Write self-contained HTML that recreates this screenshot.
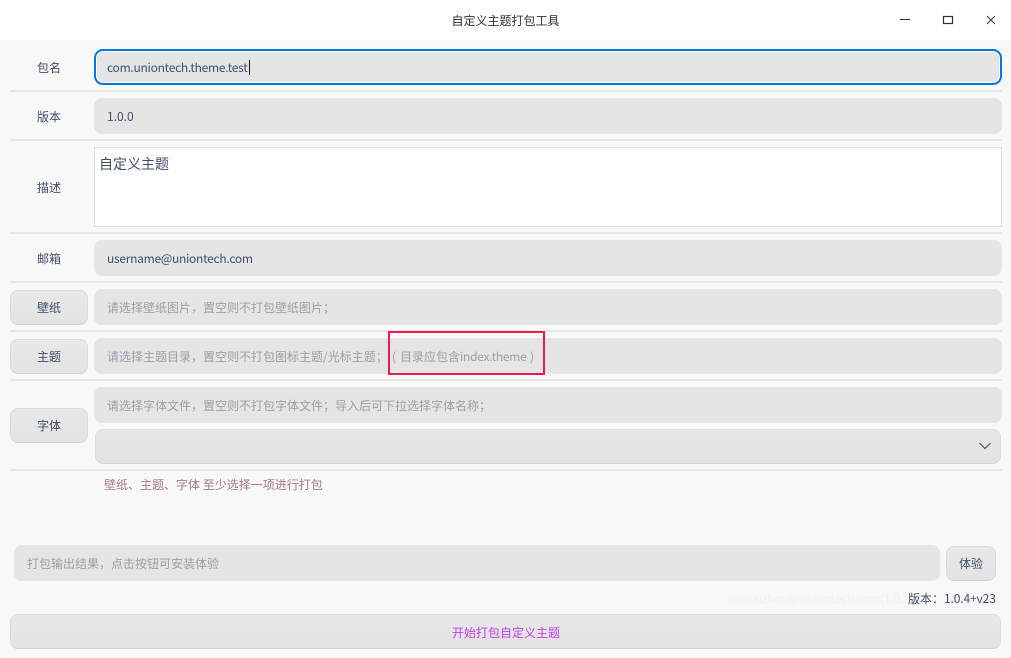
<!DOCTYPE html>
<html lang="zh">
<head>
<meta charset="utf-8">
<style>
html,body{margin:0;padding:0;width:1011px;height:658px;overflow:hidden;background:#f8f8f8;}
body{position:relative;font-family:"Noto Sans CJK SC","Liberation Sans",sans-serif;font-size:12px;color:#414d68;}
div{position:absolute;box-sizing:border-box;white-space:nowrap;}
.t{line-height:18px;height:18px;}
.field{background:#e5e5e5;border-radius:8px;}
.ph{color:#9a9fa8;}
.sep{left:10px;width:992px;height:2px;background:#e6e6e6;}
.btn{left:10px;width:78px;background:linear-gradient(#e8e8e8,#e3e3e3);border:1px solid #dcdcdc;border-bottom:1.5px solid #d4d4d4;border-radius:8px;text-align:center;color:#414d68;}
.lab{left:10px;width:78px;text-align:center;}
.l{letter-spacing:-0.27px;}
</style>
</head>
<body>
<div style="left:0;top:0;width:1011px;height:40px;background:#fff;"></div>
<div class="t" style="left:0;top:12px;width:1011px;text-align:center;color:#303030;">自定义主题打包工具</div>
<svg style="position:absolute;left:890px;top:10px" width="115" height="20" viewBox="0 0 115 20">
<path d="M10 9.5H20" stroke="#303030" stroke-width="1" fill="none"/>
<rect x="53.5" y="6.5" width="9" height="7" stroke="#303030" stroke-width="1.2" fill="none"/>
<path d="M97 6L105 14M105 6L97 14" stroke="#404040" stroke-width="1.1" fill="none"/>
</svg>

<div class="lab t" style="top:59px;">包名</div>
<div style="left:94px;top:49px;width:908px;height:36px;background:#e5e5e5;border:2px solid #0078e6;border-radius:9px;box-shadow:inset 0 0 0 1px #fff;"></div>
<div class="t l" style="left:107px;top:59px;">com.uniontech.theme.test</div>
<div style="left:249px;top:60px;width:1px;height:15px;background:#111;"></div>
<div class="sep" style="top:90px;"></div>

<div class="lab t" style="top:108px;">版本</div>
<div class="field" style="left:94px;top:98px;width:908px;height:36px;"></div>
<div class="t" style="left:107px;top:108px;">1.0.0</div>
<div class="sep" style="top:139px;"></div>

<div class="lab t" style="top:179px;">描述</div>
<div style="left:94px;top:147px;width:908px;height:80px;background:#fff;border:1px solid #e0e0e0;"></div>
<div style="left:99px;top:154px;font-size:14px;line-height:20px;">自定义主题</div>
<div class="sep" style="top:232px;"></div>

<div class="lab t" style="top:250px;">邮箱</div>
<div class="field" style="left:94px;top:240px;width:908px;height:36px;"></div>
<div class="t l" style="left:107px;top:250px;">username@uniontech.com</div>
<div class="sep" style="top:281px;"></div>

<div class="btn t" style="top:290px;height:35px;line-height:33px;">壁纸</div>
<div class="field" style="left:94px;top:289px;width:908px;height:36px;"></div>
<div class="t ph" style="left:107px;top:299px;">请选择壁纸图片，置空则不打包壁纸图片；</div>
<div class="sep" style="top:330px;"></div>

<div class="btn t" style="top:339px;height:35px;line-height:33px;">主题</div>
<div class="field" style="left:94px;top:338px;width:908px;height:36px;"></div>
<div class="t ph" style="left:107px;top:348px;">请选择主题目录，置空则不打包图标主题/光标主题；</div>
<div class="t ph" style="left:392px;top:348px;">(</div>
<div class="t ph" style="left:400px;top:348px;">目录应包含<span class="l">index.theme</span></div>
<div class="t ph" style="left:530px;top:348px;">)</div>
<div style="left:388px;top:331px;width:157px;height:44px;border:2px solid #f5184f;"></div>
<div class="sep" style="top:379px;"></div>

<div class="btn t" style="top:408px;height:35px;line-height:33px;">字体</div>
<div class="field" style="left:94px;top:387px;width:908px;height:36px;"></div>
<div class="t ph" style="left:107px;top:397px;">请选择字体文件，置空则不打包字体文件；导入后可下拉选择字体名称；</div>
<div style="left:95px;top:429px;width:906px;height:35px;background:linear-gradient(#e6e6e6,#e3e3e3);border:1px solid #dedede;border-bottom:1.5px solid #d4d4d4;border-radius:8px;"></div>
<svg style="position:absolute;left:978px;top:440px" width="14" height="12" viewBox="0 0 14 12">
<path d="M1.5 3L7 8.5L12.5 3" stroke="#414d68" stroke-width="1.2" fill="none"/>
</svg>
<div class="sep" style="top:469px;"></div>

<div class="t" style="left:104px;top:476px;color:#a87a8c;">壁纸、主题、字体 至少选择一项进行打包</div>

<div class="field" style="left:14px;top:545px;width:926px;height:36px;"></div>
<div class="t ph" style="left:27px;top:555px;">打包输出结果，点击按钮可安装体验</div>
<div class="btn t" style="left:946px;top:546px;width:50px;height:35px;line-height:33px;">体验</div>

<div class="t l" style="left:729px;top:590px;color:#f0f0f0;">wuhaizhou@uniontech.com(1.0.2)</div>
<div class="t" style="left:908px;top:590px;">版本：<span style="letter-spacing:-0.13px;">1.0.4+v23</span></div>

<div class="btn t" style="top:614px;width:991px;height:35px;line-height:35px;padding-left:1px;color:#c040f0;">开始打包自定义主题</div>
</body>
</html>
